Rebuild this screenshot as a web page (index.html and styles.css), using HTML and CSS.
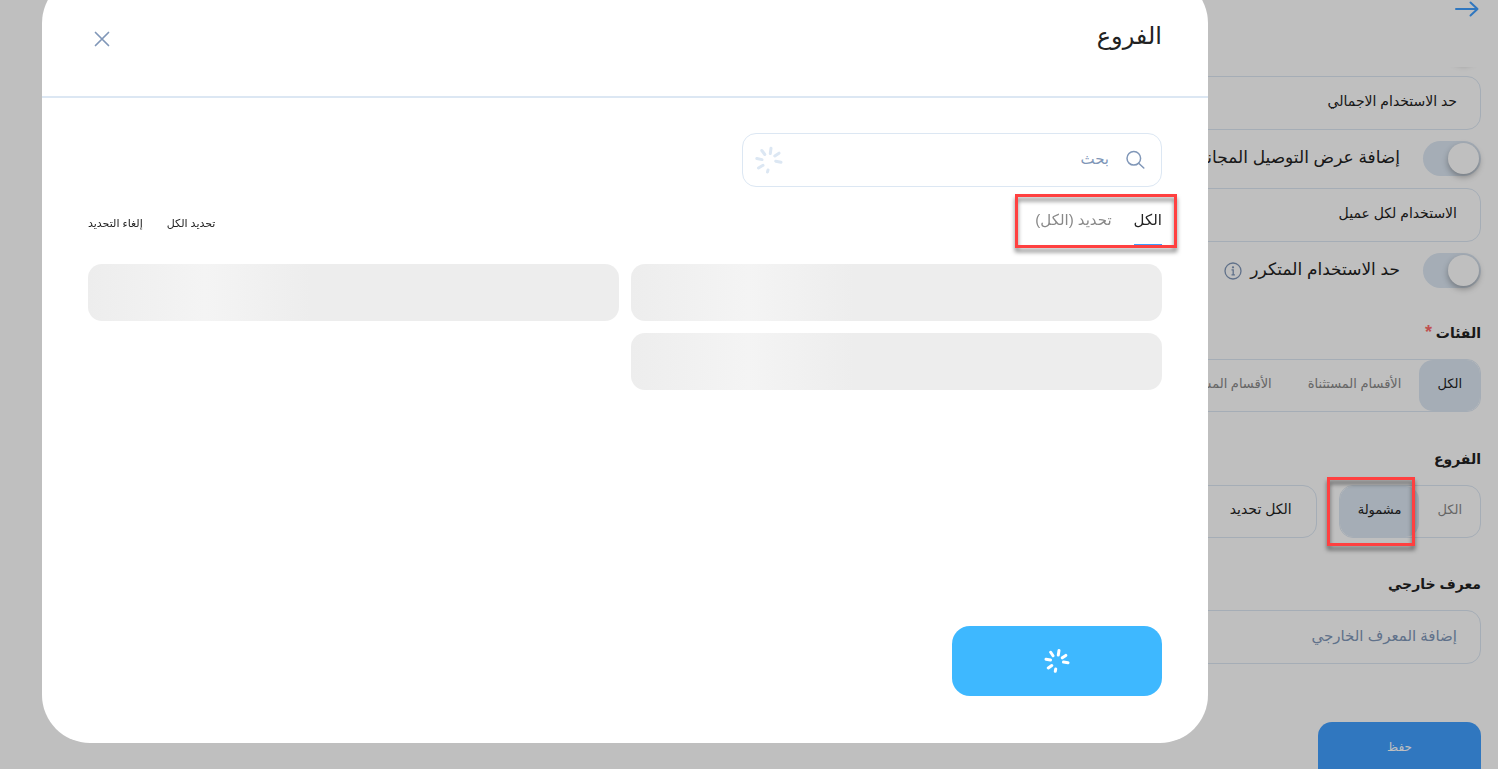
FILE: index.html
```html
<!DOCTYPE html>
<html lang="ar" dir="rtl">
<head>
  <meta charset="UTF-8" />
  <meta name="viewport" content="width=device-width, initial-scale=1" />
  <title>الفروع</title>
  <link rel="stylesheet" href="styles.css">
</head>
<body>
  <aside class="drawer">
    <header class="drawer-header">
      <button class="icon-btn" type="button" aria-label="رجوع">
        <svg width="24" height="18" viewBox="0 0 24 18" fill="none" stroke="#419fff" stroke-width="2" stroke-linecap="round" stroke-linejoin="round">
          <path d="M1 9h21M15.500 2.500L22.500 9L15.500 15.500" />
        </svg>
      </button>
    </header>

    <form class="drawer-form">
      <div class="toggle-row">
        <input class="toggle" type="checkbox" id="limit" checked aria-label="حد الاستخدام">
      </div>
      <input class="field" type="text" value="حد الاستخدام الاجمالي" aria-label="حد الاستخدام الاجمالي">

      <div class="toggle-row">
        <input class="toggle" type="checkbox" id="delivery" checked>
        <label for="delivery">إضافة عرض التوصيل المجاني</label>
      </div>
      <input class="field" type="text" value="الاستخدام لكل عميل" aria-label="الاستخدام لكل عميل">

      <div class="toggle-row">
        <input class="toggle" type="checkbox" id="repeat" checked>
        <label for="repeat">حد الاستخدام المتكرر</label>
        <svg class="info" width="18" height="18" viewBox="0 0 18 18" fill="none" stroke="#8097b8" stroke-width="1.300">
          <circle cx="9" cy="9" r="8" />
          <path d="M7.500 7.800H9.200V12.800M7.500 12.800h3.400" />
          <circle cx="9" cy="5.300" r="0.500" fill="#8097b8" />
        </svg>
      </div>

      <h3>الفئات <span class="required">*</span></h3>
      <div class="segmented">
        <button class="active" type="button">الكل</button>
        <button type="button">الأقسام المستثناة</button>
        <button type="button">الأقسام المشمولة</button>
      </div>

      <h3>الفروع</h3>
      <div class="branches">
        <div class="segmented">
          <button type="button">الكل</button>
          <button class="active" type="button">مشمولة</button>
          <span class="highlight highlight-branch"></span>
        </div>
        <button class="select-all" type="button">الكل تحديد</button>
      </div>

      <h3><label for="external">معرف خارجي</label></h3>
      <input class="field external" type="text" id="external" placeholder="إضافة المعرف الخارجي">

      <button class="save" type="button">حفظ</button>
    </form>
  </aside>

  <div class="overlay">
    <section class="modal" role="dialog" aria-labelledby="title">
      <header class="modal-header">
        <h2 id="title">الفروع</h2>
        <button class="icon-btn" type="button" aria-label="إغلاق">
          <svg width="28" height="28" viewBox="0 0 28 28" fill="none" stroke="#8097b8" stroke-width="1.700" stroke-linecap="round">
            <path d="M7.500 7.500L20.500 20.500M20.500 7.500L7.500 20.500" />
          </svg>
        </button>
      </header>

      <div class="modal-body">
        <div class="search">
          <svg width="20" height="20" viewBox="0 0 20 20" fill="none" stroke="#8097b8" stroke-width="1.500" stroke-linecap="round">
            <circle cx="8.800" cy="8.300" r="6.800" />
            <path d="M13.700 13.200L18.800 18" />
          </svg>
          <input type="text" placeholder="بحث" aria-label="بحث">
          <svg width="28" height="28" viewBox="0 0 28 28" fill="none" stroke="#dce7f3" stroke-width="3" stroke-linecap="round">
            <path d="M15.300 7.500L16 2.200M19.800 10L24 7.200M20.700 15.200L26 16.200M13 24L12.500 26M8 19.300L3.500 22M7 13.600L1.800 12.500M9.800 8.500L6.800 4.500" />
          </svg>
        </div>

        <div class="toolbar">
          <div class="tabs">
            <button class="tab active" type="button">الكل</button>
            <button class="tab" type="button">تحديد (الكل)</button>
            <span class="highlight highlight-tabs"></span>
          </div>
          <div class="actions">
            <button type="button">تحديد الكل</button>
            <button type="button">إلغاء التحديد</button>
          </div>
        </div>

        <div class="skeletons">
          <div class="skeleton"></div>
          <div class="skeleton"></div>
          <div class="skeleton"></div>
        </div>
      </div>

      <footer class="modal-footer">
        <button class="submit" type="button" aria-label="جار التحميل">
          <svg width="28" height="28" viewBox="0 0 28 28" fill="none" stroke="#fff" stroke-width="3" stroke-linecap="round">
            <path d="M15.300 8L16 3.500M19.300 10.800L22.800 8.400M20.500 15L25 15.700M12.700 22L12.300 24.300M8.800 18.500L5.300 21M7.500 13L3 12.200M10 8.800L7.700 5.300" />
          </svg>
        </button>
      </footer>
    </section>
  </div>
</body>
</html>
```

FILE: styles.css
```css
* {
  box-sizing: border-box;
}
body {
  margin: 0;
  height: 100vh;
  overflow: hidden;
  background: #fff;
  color: #222;
  font-family: "Liberation Sans", "DejaVu Sans", sans-serif;
  font-size: 16px;
}
button, input {
  font-family: inherit;
  color: inherit;
}
button {
  border: none;
  background: none;
  padding: 0;
  cursor: pointer;
}
.icon-btn {
  display: flex;
}

/* drawer */
.drawer {
  display: flex;
  flex-direction: column;
  width: 640px;
  height: 100%;
}
.drawer-header {
  flex: none;
  height: 67px;
  padding: 0 19px;
}
.drawer-form {
  flex: 1;
  display: flex;
  flex-direction: column;
  overflow: hidden;
  padding: 0 17px;
}
.drawer-form > * {
  flex: none;
}
.field {
  height: 54px;
  padding: 0 23px 4px;
  border: 1px solid #dce7f3;
  border-radius: 14px;
  background: #fff;
  font-size: 14px;
}
.external {
  font-size: 15px;
}
.field::placeholder {
  color: #8097b8;
  opacity: 1;
}
.toggle-row {
  display: flex;
  align-items: center;
  height: 35px;
  margin: 11px 0 12px;
  font-size: 17px;
}
.toggle-row:first-child {
  margin-top: -38px;
}
.toggle-row label {
  margin-right: 23px;
  padding-bottom: 2px;
  white-space: nowrap;
}
.toggle {
  appearance: none;
  display: flex;
  width: 58px;
  height: 35px;
  margin: 0;
  padding: 2px;
  border-radius: 18px;
  background: #dce7f3;
}
.toggle::before {
  content: "";
  width: 31px;
  height: 31px;
  border-radius: 50%;
  background: #fff;
  box-shadow: 0 3px 6px rgba(0,0,0,0.3);
}
.info {
  margin-right: 8px;
}
h3 {
  margin: 36px 0 15px;
  font-size: 14px;
  line-height: 22px;
}
.toggle-row + h3 {
  margin-top: 22px;
}
.branches + h3 {
  margin-top: 35px;
}
.required {
  color: #ff6b6b;
  font-size: 18px;
  line-height: 18px;
}
.segmented {
  position: relative;
  display: flex;
  height: 53px;
  border: 1px solid #dce7f3;
  border-radius: 14px;
}
.segmented button {
  padding: 0 18px 4px;
  border-radius: 14px;
  color: #888;
  font-size: 13px;
  white-space: nowrap;
}
.segmented .active {
  background: #dce7f3;
  color: #222;
}
.branches {
  display: flex;
  gap: 22px;
}
.select-all {
  flex: 1;
  padding: 0 24px 6px;
  border: 1px solid #dce7f3;
  border-radius: 14px;
  font-size: 14px;
  text-align: right;
}
.save {
  align-self: flex-start;
  width: 163px;
  height: 70px;
  margin-top: 58px;
  padding-bottom: 20px;
  border-radius: 14px;
  background: #419fff;
  color: #fff;
  font-size: 12px;
}

/* modal */
.overlay {
  position: fixed;
  inset: 0;
  z-index: 1;
  display: flex;
  padding: 0 290px 26px 42px;
  background: rgba(0,0,0,0.25);
}
.modal {
  flex: 1;
  display: flex;
  flex-direction: column;
  margin-top: -25px;
  border-radius: 48px;
  background: #fff;
}
.modal-header {
  display: flex;
  align-items: center;
  justify-content: space-between;
  height: 123px;
  padding: 6px 46px 0;
  border-bottom: 2px solid #dce7f3;
}
h2 {
  margin: 0;
  padding-bottom: 6px;
  font-size: 24px;
  font-weight: normal;
}
.modal-body {
  flex: 1;
  padding: 35px 46px 0;
}
.search {
  display: flex;
  align-items: center;
  gap: 16px;
  width: 420px;
  height: 54px;
  padding: 0 16px 0 12px;
  border: 1px solid #dce7f3;
  border-radius: 14px;
}
.search input {
  flex: 1;
  min-width: 0;
  padding: 0 0 3px;
  border: none;
  outline: none;
  font-size: 15px;
}
.search input::placeholder {
  color: #8097b8;
  opacity: 1;
}
.toolbar {
  display: flex;
  align-items: center;
  justify-content: space-between;
  height: 77px;
  padding-bottom: 2px;
}
.tabs {
  position: relative;
  display: flex;
  gap: 22px;
}
.tab {
  height: 42px;
  padding-bottom: 8px;
  border-bottom: 2px solid transparent;
  color: #888;
  font-size: 15px;
}
.tab.active {
  border-color: #419fff;
  color: #222;
}
.actions {
  display: flex;
  gap: 24px;
  padding-bottom: 2px;
}
.actions button {
  font-size: 11px;
}
.skeletons {
  display: grid;
  grid-template-columns: 1fr 1fr;
  gap: 12px;
}
.skeleton {
  height: 57px;
  border-radius: 14px;
  background: linear-gradient(90deg, #ededed, #f4f4f4 22%, #ededed 42%);
}
.modal-footer {
  padding: 0 46px 47px;
}
.submit {
  display: flex;
  align-items: center;
  justify-content: center;
  width: 210px;
  height: 70px;
  border-radius: 18px;
  background: #3eb8ff;
}

/* red marker frames */
.highlight {
  position: absolute;
  z-index: 2;
  border: 3px solid #ff4040;
  filter: drop-shadow(0 4px 2px rgba(0,0,0,0.5));
  pointer-events: none;
}
.highlight-tabs {
  inset: -10px -15px -2px -20px;
}
.highlight-branch {
  inset: -9px 65px -9px -13px;
}
```
